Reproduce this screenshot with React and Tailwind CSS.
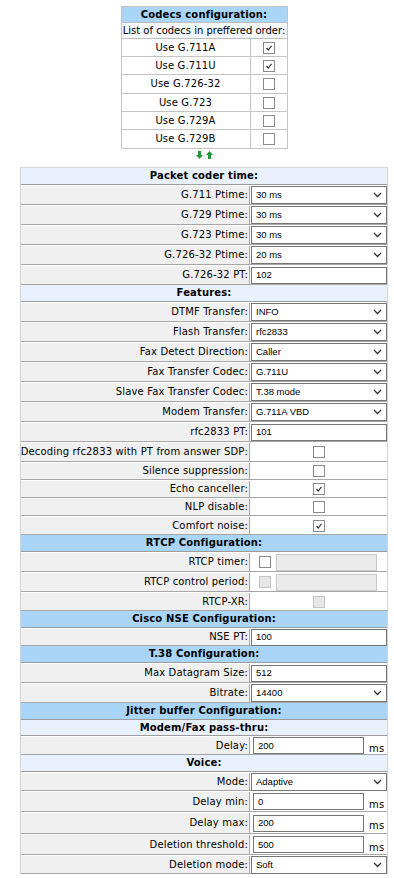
const label = "font-['DejaVu_Sans',sans-serif] text-[10px] text-black leading-none tracking-[0.15px] whitespace-nowrap"

function Check({ checked, disabled }) {
  return (
    <div
      className={`w-[12px] h-[12px] border flex items-center justify-center ${
        disabled ? 'bg-[#e6e6e6] border-[#c4c4c4]' : 'bg-white border-[#8a8a8a]'
      }`}
    >
      {checked && (
        <svg width="8" height="8" viewBox="0 0 8 8">
          <polyline points="1.5,4 3.2,6 6.5,1.8" fill="none" stroke="#333" strokeWidth="1.2" />
        </svg>
      )}
    </div>
  )
}

function Select({ value }) {
  return (
    <div className="w-[136px] h-[18px] border border-[#767676] bg-white flex items-center pl-[4px] pr-[4px]">
      <span className="flex-1 font-['Liberation_Sans',sans-serif] text-[9.5px] text-black leading-none">{value}</span>
      <svg width="9" height="6" viewBox="0 0 9 6">
        <polyline points="1,1 4.5,4.5 8,1" fill="none" stroke="#333" strokeWidth="1.3" />
      </svg>
    </div>
  )
}

function Field({ value, w = 'w-[136px]' }) {
  return (
    <div className={`${w} h-[17px] border border-[#767676] bg-white flex items-center pl-[4px]`}>
      <span className="font-['Liberation_Sans',sans-serif] text-[9.5px] text-black leading-none">{value}</span>
    </div>
  )
}

function Head({ children, dark, h = 'h-[17px]' }) {
  return (
    <div
      className={`${h} flex items-center justify-center border-b border-[#9c9c9c] ${
        dark ? 'bg-[#a9d5f9]' : 'bg-[#e8f1fd]'
      }`}
    >
      <span className={`${label} font-bold`}>{children}</span>
    </div>
  )
}

function Row({ name, h = 'h-[20px]', center, children }) {
  return (
    <div className={`${h} flex border-t border-t-white border-b border-b-[#a6a6a6]`}>
      <div className="w-[229px] bg-[#f0f0f0] flex items-center justify-end pr-[1px] border-r border-r-[#a6a6a6]">
        <span className={label}>{name}</span>
      </div>
      <div className={`flex-1 bg-white flex items-center border-l border-l-white ${center ? 'justify-center' : ''}`}>
        {children}
      </div>
    </div>
  )
}

function MsRow({ name, value, h }) {
  return (
    <Row name={name} h={h}>
      <div className="ml-[2px]">
        <Field value={value} w="w-[111px]" />
      </div>
      <span className={`${label} ml-[5px] mt-[6px]`}>ms</span>
    </Row>
  )
}

const codecs = [
  ['Use G.711A', true, 'h-[18px]'],
  ['Use G.711U', true, 'h-[18px]'],
  ['Use G.726-32', false, 'h-[19px]'],
  ['Use G.723', false, 'h-[18px]'],
  ['Use G.729A', false, 'h-[18px]'],
  ['Use G.729B', false, 'h-[18px]'],
]

export default function App() {
  return (
    <div className="w-[394px] min-h-[878px] bg-white pl-[20px] pt-[6px]">
      <div className="w-[368px] flex flex-col items-center">
        {/* Codecs table */}
        <div className="w-[167px] border border-[#c4c4c4]">
          <div className="h-[16px] bg-[#a9d5f9] flex items-center justify-center border-b border-[#bdbdbd]">
            <span className={`${label} font-bold`}>Codecs configuration:</span>
          </div>
          <div className="h-[16px] bg-[#f4f8fe] flex items-center justify-center border-b border-[#bdbdbd]">
            <span className={`${label} tracking-normal`}>List of codecs in preffered order:</span>
          </div>
          {codecs.map(([name, on, h]) => (
            <div key={name} className={`${h} flex border-b border-[#c4c4c4] last:border-b-0`}>
              <div className="flex-1 flex items-center justify-center border-r border-[#c4c4c4] bg-white">
                <span className={label}>{name}</span>
              </div>
              <div className="w-[36px] flex items-center justify-center bg-white">
                <Check checked={on} />
              </div>
            </div>
          ))}
        </div>

        {/* order arrows */}
        <div className="flex gap-[3px] mt-[2px] h-[8px]">
          <svg width="7" height="8" viewBox="0 0 7 8">
            <rect x="2" y="0" width="3" height="4" fill="#1f9a3b" />
            <polygon points="0,4 7,4 3.5,8" fill="#1f9a3b" />
          </svg>
          <svg width="7" height="8" viewBox="0 0 7 8">
            <polygon points="0,4 7,4 3.5,0" fill="#1f9a3b" />
            <rect x="2" y="4" width="3" height="4" fill="#1f9a3b" />
          </svg>
        </div>

        {/* Main settings table */}
        <div className="w-[368px] mt-[8px] border-l border-r border-t border-[#d4d4d4]">
          <Head>Packet coder time:</Head>
          <Row name="G.711 Ptime:"><Select value="30 ms" /></Row>
          <Row name="G.729 Ptime:"><Select value="30 ms" /></Row>
          <Row name="G.723 Ptime:"><Select value="30 ms" /></Row>
          <Row name="G.726-32 Ptime:"><Select value="20 ms" /></Row>
          <Row name="G.726-32 PT:"><Field value="102" /></Row>

          <Head>Features:</Head>
          <Row name="DTMF Transfer:"><Select value="INFO" /></Row>
          <Row name="Flash Transfer:"><Select value="rfc2833" /></Row>
          <Row name="Fax Detect Direction:"><Select value="Caller" /></Row>
          <Row name="Fax Transfer Codec:"><Select value="G.711U" /></Row>
          <Row name="Slave Fax Transfer Codec:"><Select value="T.38 mode" /></Row>
          <Row name="Modem Transfer:"><Select value="G.711A VBD" /></Row>
          <Row name="rfc2833 PT:"><Field value="101" /></Row>
          <Row name="Decoding rfc2833 with PT from answer SDP:" center><Check /></Row>
          <Row name="Silence suppression:" h="h-[18px]" center><Check /></Row>
          <Row name="Echo canceller:" h="h-[18px]" center><Check checked /></Row>
          <Row name="NLP disable:" h="h-[18px]" center><Check /></Row>
          <Row name="Comfort noise:" h="h-[19px]" center><Check checked /></Row>

          <Head dark>RTCP Configuration:</Head>
          <Row name="RTCP timer:">
            <div className="ml-[8px]"><Check /></div>
            <div className="ml-[5px] w-[101px] h-[17px] border border-[#c8c8c8] bg-[#ebebeb]" />
          </Row>
          <Row name="RTCP control period:">
            <div className="ml-[8px]"><Check disabled /></div>
            <div className="ml-[5px] w-[101px] h-[17px] border border-[#c8c8c8] bg-[#ebebeb]" />
          </Row>
          <Row name="RTCP-XR:" h="h-[19px]" center><Check disabled /></Row>

          <Head dark>Cisco NSE Configuration:</Head>
          <Row name="NSE PT:" h="h-[18px]"><Field value="100" /></Row>

          <Head dark>T.38 Configuration:</Head>
          <Row name="Max Datagram Size:"><Field value="512" /></Row>
          <Row name="Bitrate:"><Select value="14400" /></Row>

          <Head dark>Jitter buffer Configuration:</Head>
          <Head h="h-[16px]">Modem/Fax pass-thru:</Head>
          <MsRow name="Delay:" value="200" h="h-[19px]" />
          <Head>Voice:</Head>
          <Row name="Mode:" h="h-[19px]"><Select value="Adaptive" /></Row>
          <MsRow name="Delay min:" value="0" h="h-[21px]" />
          <MsRow name="Delay max:" value="200" h="h-[22px]" />
          <MsRow name="Deletion threshold:" value="500" h="h-[21px]" />
          <Row name="Deletion mode:" h="h-[19px]"><Select value="Soft" /></Row>
        </div>
      </div>
    </div>
  )
}
